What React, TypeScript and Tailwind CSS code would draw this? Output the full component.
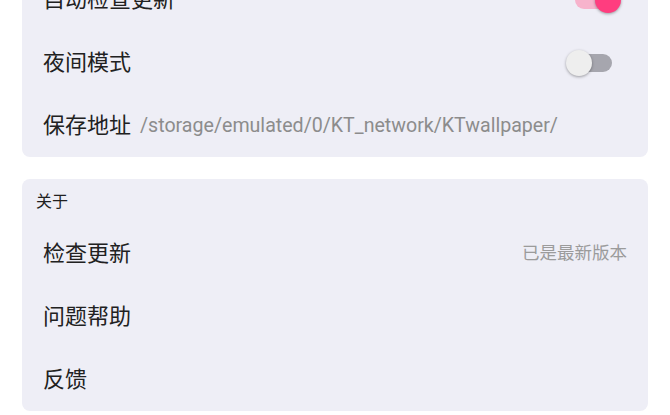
import React from "react";

function Switch({ on, className }: { on: boolean; className?: string }) {
  return (
    <div className={"relative w-[46px] h-[26px] shrink-0 " + (className ?? "")}>
      <div
        className={
          "absolute top-[4px] h-[18px] w-[43px] rounded-full " +
          (on ? "left-0 bg-[#f7b3cc]" : "left-[3px] bg-[#a6a6ae]")
        }
      />
      <div
        className={
          "absolute top-0 h-[26px] w-[26px] rounded-full shadow-[0_1px_3px_rgba(0,0,0,0.35)] " +
          (on ? "right-0 bg-[#ff3d7f]" : "left-0 bg-[#eeeeee]")
        }
      />
    </div>
  );
}

function Row({ children }: { children: React.ReactNode }) {
  return <div className="h-[63px] flex items-center pl-[21px]">{children}</div>;
}

export default function App() {
  return (
    <div
      className="w-[670px] h-[415px] overflow-hidden bg-white text-[#212121]"
      style={{ fontFamily: 'Roboto, "Noto Sans CJK SC", sans-serif' }}
    >
      <div className="px-[22px] -mt-[32px] flex flex-col gap-[22px]">
        <div className="rounded-[8px] bg-[#eeeef6] flex flex-col">
          <Row>
            <span className="text-[22px] leading-none">自动检查更新</span>
            <Switch on className="ml-auto mr-[27px]" />
          </Row>
          <Row>
            <span className="text-[22px] leading-none">夜间模式</span>
            <Switch on={false} className="ml-auto mr-[36px]" />
          </Row>
          <Row>
            <span className="text-[22px] leading-none">保存地址</span>
            <span className="ml-[9px] text-[19.6px] leading-none text-[#8c8c8c]">
              /storage/emulated/0/KT_network/KTwallpaper/
            </span>
          </Row>
        </div>
        <div className="rounded-[8px] bg-[#eeeef6] flex flex-col pt-[12px]">
          <div className="h-[22px] flex items-center pl-[14px] text-[16px] leading-none">关于</div>
          <div className="mt-[9px]">
            <Row>
              <span className="text-[22px] leading-none">检查更新</span>
              <span className="ml-auto mr-[21px] text-[17.5px] leading-none text-[#9b9b9b]">已是最新版本</span>
            </Row>
            <Row>
              <span className="text-[22px] leading-none">问题帮助</span>
            </Row>
            <Row>
              <span className="text-[22px] leading-none">反馈</span>
            </Row>
          </div>
        </div>
      </div>
    </div>
  );
}
